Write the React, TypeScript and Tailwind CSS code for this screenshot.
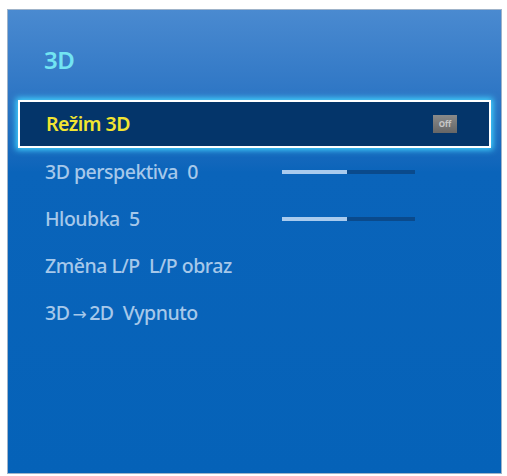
import React from "react";

function Slider({ pct }: { pct: number }) {
  return (
    <div className="flex h-[4px] w-[133px]">
      <div className="h-full bg-[#a9cbee]" style={{ width: `${pct}%` }} />
      <div className="h-full flex-1 bg-[#0a4a8c]" />
    </div>
  );
}

export default function App() {
  const font = { fontFamily: '"Noto Sans", "Open Sans", sans-serif' };
  return (
    <div className="w-[507px] h-[476px] bg-white pt-[9px] pl-[7px]" style={font}>
      <div className="w-[495px] h-[465px] border border-[#9fb3c9] bg-gradient-to-b from-[#4a8ad0] via-[#0a64ba] via-35% to-[#0562b8] flex flex-col">
        <div className="h-[90px] flex items-center pl-[36px] pt-[10px]">
          <span className="text-[24px] font-semibold text-[#72e4f2] tracking-tight">3D</span>
        </div>
        <div className="mx-[10px] h-[48px] border-2 border-white bg-[#04356a] shadow-[0_0_6px_2px_#42d4ff] flex items-center justify-between pl-[26px] pr-[32px]">
          <span className="text-[19.5px] font-semibold text-[#f2e531] tracking-tight">Režim 3D</span>
          <div className="w-[24px] h-[18px] bg-gradient-to-b from-[#8a8a8a] to-[#666666] flex items-center justify-center">
            <span className="text-[8px] text-[#c8c8c8] font-bold leading-none">Off</span>
          </div>
        </div>
        <div className="flex flex-col pl-[37px] text-[19.5px] text-[#a6c8ea] font-medium tracking-tight">
          <div className="h-[47px] flex items-center pt-[1px]">
            <span className="w-[237px]">3D perspektiva&nbsp;&nbsp;0</span>
            <Slider pct={49} />
          </div>
          <div className="h-[47px] flex items-center">
            <span className="w-[237px]">Hloubka&nbsp;&nbsp;5</span>
            <Slider pct={49} />
          </div>
          <div className="h-[47px] flex items-center">
            <span>Změna L/P&nbsp;&nbsp;L/P obraz</span>
          </div>
          <div className="h-[47px] flex items-center">
            <span>
              3D<span style={{ fontFamily: '"DejaVu Sans", sans-serif' }} className="text-[17px] px-[3px]">→</span>2D&nbsp;&nbsp;Vypnuto
            </span>
          </div>
        </div>
      </div>
    </div>
  );
}
